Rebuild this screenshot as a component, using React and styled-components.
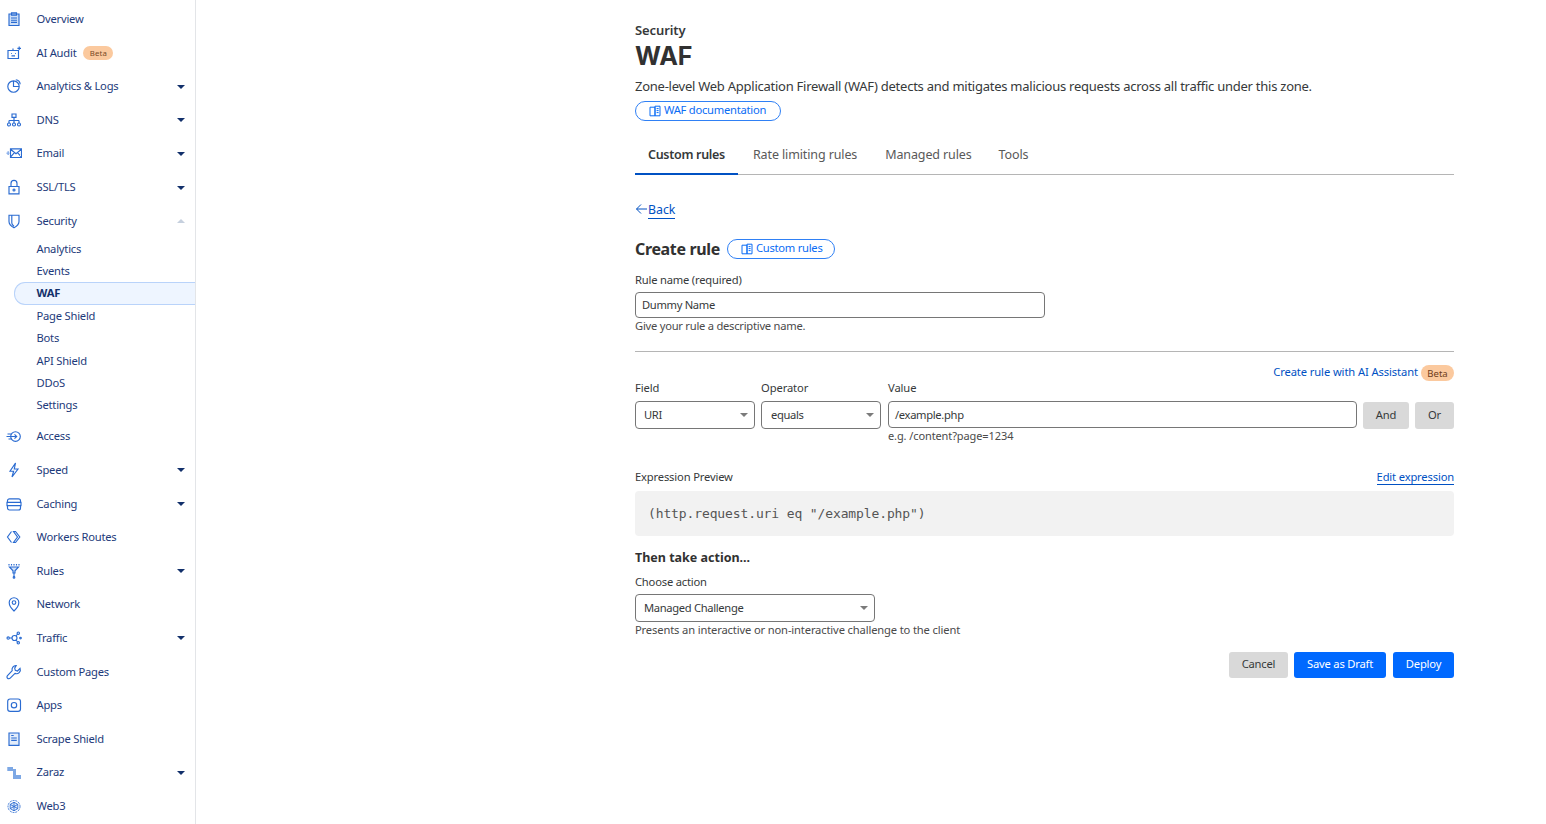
import React from 'react';
import styled, { createGlobalStyle } from 'styled-components';

const FONT = '"Noto Sans", "Open Sans", sans-serif';

const Global = createGlobalStyle`
  html, body { margin: 0; padding: 0; background: #fff; }
  body { font-family: ${FONT}; height: 824px; overflow: hidden; }
  * { box-sizing: border-box; }
`;

const Page = styled.div`display: flex; height: 824px; overflow: hidden;`;
const Sidebar = styled.nav`
  width: 196px; flex: none; height: 824px; overflow: hidden; padding-top: 2.3px;
  border-right: 1px solid #e3e5e8; display: flex; flex-direction: column;
`;
const NavRow = styled.div`
  height: 33.6px; flex: none; display: flex; align-items: center; position: relative;
  padding-left: 6px; padding-right: 10px; color: #1d3a7a; font-size: 11.2px; letter-spacing: -.22px;
`;
const NavIcon = styled.svg`
  width: 16px; height: 16px; flex: none; margin-right: 14.5px; fill: none; stroke: #2a6bd1; stroke-width: 1.15;
`;
const NavLabel = styled.span`flex: 1; white-space: nowrap; margin-top: -1px;`;
const Caret = styled.span`
  width: 0; height: 0; border-left: 4px solid transparent; border-right: 4px solid transparent; margin-top: 1px;
  border-top: ${p => (p.$up ? 0 : '4px solid #12306b')};
  border-bottom: ${p => (p.$up ? '4px solid #c6d0de' : 0)};
`;
const SmallBeta = styled.span`
  margin-left: 7px; margin-right: auto; height: 14px; width: 30px; border-radius: 7px; background: #fbc99e; color: #7a4a25;
  font-size: 7.8px; display: flex; align-items: center; justify-content: center; letter-spacing: .2px;
`;
const AuditLabel = styled.span`white-space: nowrap; margin-top: -1px;`;
const SubList = styled.div`display: flex; flex-direction: column; margin-bottom: 3px; flex: none;`;
const SubRow = styled.div`
  height: 22.4px; flex: none; display: flex; align-items: center; padding-left: 36.5px; padding-bottom: 1px; color: #1d3a7a; font-size: 11.2px; letter-spacing: -.22px;
`;
const ActiveSub = styled(SubRow)`
  margin-left: 14px; padding-left: 21.5px; font-weight: 700; color: #12306b; background: #eef5ff;
  border: 1px solid #b9d3fa; border-right: 0; border-radius: 11px 0 0 11px;
`;

const Main = styled.main`
  width: 819px; margin-left: 439px; flex: none; padding-top: 20px; display: flex; flex-direction: column;
  color: #36393a; font-size: 11.2px;
`;
const Eyebrow = styled.div`height: 20px; line-height: 20px; font-size: 13px; font-weight: 600; letter-spacing: -.1px;`;
const Title = styled.h1`margin: -2px 0 2px; height: 36px; line-height: 36px; font-size: 25px; font-weight: 700; color: #313131; font-family: "Inter", ${FONT};`;
const Desc = styled.p`margin: 0; height: 20px; line-height: 20px; font-size: 13px; letter-spacing: -.25px;`;
const Pill = styled.a`
  height: 20px; width: ${p => p.$w}px; display: inline-flex; align-items: center; align-self: flex-start; gap: 3px; border: 1px solid #2f80f5; border-radius: 10px;
  padding: 0 0 3px 13px; color: #0a6cf5; font-size: 11.2px; letter-spacing: -.25px; white-space: nowrap;
`;
const DocPill = styled(Pill)`margin-top: 5px;`;
const BookSvg = styled.svg`width: 12px; height: 12px; fill: none; stroke: #0a6cf5; stroke-width: 1; flex: none; margin-top: 3px;`;
const Tabs = styled.div`margin-top: 12px; height: 42px; display: flex; border-bottom: 1px solid #b5b5b5;`;
const Tab = styled.div`
  height: 42px; padding: 0 ${p => p.$pr || 13}px 0 ${p => p.$pl || 13}px; line-height: 43px; font-size: 12.5px; white-space: nowrap;
  letter-spacing: ${p => (p.$active ? '-.3px' : '-.12px')};
  font-weight: ${p => (p.$active ? 600 : 400)}; color: ${p => (p.$active ? '#36393a' : '#595959')};
  border-bottom: ${p => (p.$active ? '2px solid #0051c3' : 'none')};
`;
const BackRow = styled.div`margin-top: 24px; height: 20px; display: flex; align-items: center; color: #0051c3; font-size: 12.3px;`;
const BackLink = styled.a`border-bottom: 1px solid #0051c3; line-height: 18px; height: 18px; margin-top: 1px;`;
const CreateRow = styled.div`margin-top: 20px; height: 20px; display: flex; align-items: center; gap: 7px;`;
const CreateTitle = styled.h2`margin: 0; font-size: 16px; letter-spacing: -.35px; font-weight: 700; color: #313131; line-height: 20px;`;
const Label = styled.label`display: block; height: 16px; line-height: 16px; font-size: 11.2px; letter-spacing: -.2px; color: #36393a; margin-top: ${p => p.$mt || 0}px;`;
const Box = styled.div`
  height: ${p => p.$h || 26}px; border: 1px solid #767676; border-radius: 4px; padding-left: ${p => p.$pl || 6}px;
  display: flex; align-items: center; font-size: 11.2px; letter-spacing: -.33px; color: #36393a; background: #fff; position: relative; flex: none;
  width: ${p => (p.$w ? p.$w + 'px' : 'auto')}; padding-bottom: ${p => (p.$h === 28 ? 2 : 1)}px;
`;
const NameInput = styled(Box)`margin-top: 4px;`;
const Help = styled.div`height: 16px; line-height: 16px; font-size: 11.2px; letter-spacing: ${p => p.$ls || -0.25}px; color: #4a4a4a;`;
const Divider = styled.hr`margin: 17px 0 0; border: 0; height: 1px; background: #b5b5b5; width: 100%;`;
const AiRow = styled.div`margin-top: 13px; height: 16px; display: flex; justify-content: flex-end; align-items: center; gap: 3px; color: #0051c3; font-size: 11.2px; letter-spacing: -.1px;`;
const AiText = styled.span`margin-top: -3px;`;
const Beta = styled.span`width: 33px; height: 16px; border-radius: 8px; background: #fbc99e; color: #6c3b1a; font-size: 9.5px; letter-spacing: 0; display: flex; align-items: center; justify-content: center;`;
const Grid = styled.div`display: grid; grid-template-columns: 120px 121px 469px 46px 39px; column-gap: 6px; grid-template-rows: 14px 6px 28px 14px;`;
const GridLabel = styled.div`grid-row: 1; line-height: 14px; font-size: 11.2px; letter-spacing: -.1px;`;
const Caret2 = styled.span`
  position: absolute; right: 6px; top: 50%; margin-top: -2px; width: 0; height: 0; border-left: 4px solid transparent; border-right: 4px solid transparent; border-top: 4px solid #7b7b7b;
`;
const SelectCell = styled(Box)`grid-row: 3;`;
const ValueInput = styled(Box)`grid-row: 3; height: 27px;`;
const GreyBtn = styled.button`
  height: 26px; width: ${p => p.$w}px; border: 0; border-radius: 3px; background: #d9d9d9; color: #36393a; font: inherit; font-size: 11.2px; letter-spacing: -.2px; padding: 0 0 3px;
  display: flex; align-items: center; justify-content: center;
`;
const GridBtn = styled(GreyBtn)`grid-row: 3; height: 27px; margin-top: 1px; width: auto;`;
const GridHelp = styled.div`grid-row: 4; grid-column: 3; line-height: 14px; font-size: 11px; letter-spacing: -.1px; color: #4a4a4a;`;
const ExprHead = styled.div`margin-top: 26px; height: 16px; display: flex; justify-content: space-between; line-height: 16px; font-size: 11.2px; letter-spacing: -.16px;`;
const EditLink = styled.a`color: #0051c3; border-bottom: 1px solid #0051c3; height: 16px;`;
const Code = styled.pre`
  margin: 6px 0 0; height: 45px; line-height: 45px; border-radius: 4px; background: #f2f2f2; padding-left: 13px; color: #555;
  font-family: "DejaVu Sans Mono", monospace; font-size: 13px; letter-spacing: -.12px;
`;
const ActionTitle = styled.div`margin-top: 12px; height: 20px; line-height: 20px; font-size: 12.5px; font-weight: 700; color: #313131;`;
const ActionSelect = styled(Box)`margin-top: 4px;`;
const Buttons = styled.div`margin-top: 14px; display: flex; justify-content: flex-end; gap: 6px;`;
const BlueBtn = styled(GreyBtn)`background: #0069ff; color: #fff;`;
const DeployBtn = styled(BlueBtn)`margin-left: 1px;`;

const BookIcon = () => (
  <BookSvg viewBox="0 0 12 12"><path d="M6 2.2H1v8.6h5zM6 1.2h5v9.6H6zM7.6 3.6h2M7.6 5.6h2M7.6 7.6h2" /></BookSvg>
);

const icons = {
  overview: <><path d="M3 3h10v11.5H3z" fill="#cfe0f7" /><path d="M5.5 1.8h5v2.4h-5zM5 7h6M5 9.2h6M5 11.4h6" /></>,
  audit: <><path d="M2 5.5h10.5v8H2z" /><path d="M7 5.5V3.5M5 8.5h.8M9 8.5h.8M5.5 10.8h3.5M13.2 1.5v3.6M11.4 3.3h3.6" /></>,
  analytics: <><circle cx="7.5" cy="8.5" r="5.7" /><path d="M7.5 3v5.5h5.5" /><path d="M9.8 1.8a5 5 0 0 1 4.4 4.5" /></>,
  dns: <><path d="M6 2h4v3.4H6zM8 5.4v3M3 8.5h10M3 8.5v2.5M8 8.5v2.5M13 8.5v2.5" /><circle cx="3" cy="12.5" r="1.5" /><circle cx="8" cy="12.5" r="1.5" /><circle cx="13" cy="12.5" r="1.5" /></>,
  email: <><path d="M4.5 3.8h11v8.7h-11zM4.5 4.2l5.5 4.6 5.5-4.6M4.5 12.2l3.9-4.6M15.5 12.2l-3.9-4.6" /><path d="M.5 8.2h3M2.2 6.3v3.8" stroke="#8fb2ea" strokeWidth="1.6" /></>,
  lock: <><path d="M3 7.5h10v7.3H3zM5 7.5V4.4a3 3 0 0 1 6 0v3.1" /><circle cx="8" cy="11" r="1" /></>,
  shield: <path d="M3 2.2h10v6.3c0 3-2.5 5-5 6.3-2.5-1.3-5-3.3-5-6.3zM5.8 2.5v7.5c0 1.3 1.2 2.5 2.2 3.2" />,
  access: <><circle cx="9.5" cy="8.5" r="4.8" /><path d="M.5 8.5h10M8.5 6.4l2.2 2.1-2.2 2.1M1.5 6h4M2.5 11h3" /></>,
  speed: <path d="M9.5 1 4 9.2h3.6L6 15l6-8H8.3z" />,
  caching: <path d="M3.5 2.8h9a2 2 0 0 1 2 2v1.6h-13V4.8a2 2 0 0 1 2-2zM1 6.4h14v3.2H1zM1.5 9.6h13v2.4a2 2 0 0 1-2 2h-9a2 2 0 0 1-2-2z" />,
  workers: <path d="M5.5 2.5 1.5 8l4 5.5M7.5 2.5h2L13.8 8l-4.3 5.5h-2L11.5 8z" />,
  rules: <><path d="M3.5 4 7 7.8V10h2V7.8L12.5 4z" fill="#cfe0f7" /><path d="M8 10v4M3 1v1.6M5.5 1v1.6M8 1v1.6M10.5 1v1.6M13 1v1.6" /><circle cx="8" cy="14.4" r=".8" /></>,
  network: <><path d="M8 15S3.2 10.5 3.2 6.5a4.8 4.8 0 0 1 9.6 0C12.8 10.5 8 15 8 15z" /><circle cx="8" cy="6.5" r="1.8" /></>,
  traffic: <><circle cx="2.2" cy="8" r="1.2" /><circle cx="8.5" cy="8" r="2.5" /><circle cx="12.3" cy="3.2" r="1.2" /><circle cx="12.3" cy="12.8" r="1.2" /><circle cx="14.5" cy="8" r=".8" /><path d="M3.5 8H6M10 6l1.6-2M10 10l1.6 2" /></>,
  pages: <path d="M10.2 1.6a3.9 3.9 0 0 0-4 5.1L1.5 11.6a1.8 1.8 0 0 0 2.7 2.6l4.8-4.8a3.9 3.9 0 0 0 5.1-5L11.5 7 9.3 6.4l-.6-2.2z" />,
  apps: <><rect x="1.7" y="2" width="12.8" height="12.4" rx="2.4" /><circle cx="8" cy="8.2" r="2.7" /></>,
  scrape: <><path d="M3 2h10v12.4H3z" fill="#e2ecfa" /><path d="M5.2 4.5h2.5M5.2 7h5.6M5.2 9.3h5.6" /></>,
  zaraz: <path d="M1.3 3H7v2h3v6h5v4H7V7H1.3z" fill="#7da8e5" stroke="none" />,
  web3: <g strokeWidth=".9"><circle cx="8" cy="8.5" r="6" strokeDasharray="2 .9" /><path d="M8 4.2 11.8 6.4v4.2L8 12.8 4.2 10.6V6.4z" fill="#e6eefa" /><path d="M8 4.2v8.6M4.2 6.4l7.6 4.2M11.8 6.4l-7.6 4.2" /></g>,
};

const Row = ({ icon, children, caret, up }) => (
  <NavRow>
    <NavIcon viewBox="0 0 16 16">{icons[icon]}</NavIcon>
    <NavLabel>{children}</NavLabel>
    {caret && <Caret $up={up} />}
  </NavRow>
);

export default function App() {
  return (
    <Page>
      <Global />
      <Sidebar>
        <Row icon="overview">Overview</Row>
        <NavRow>
          <NavIcon viewBox="0 0 16 16">{icons.audit}</NavIcon>
          <AuditLabel>AI Audit</AuditLabel>
          <SmallBeta>Beta</SmallBeta>
        </NavRow>
        <Row icon="analytics" caret>Analytics &amp; Logs</Row>
        <Row icon="dns" caret>DNS</Row>
        <Row icon="email" caret>Email</Row>
        <Row icon="lock" caret>SSL/TLS</Row>
        <Row icon="shield" caret up>Security</Row>
        <SubList>
          <SubRow>Analytics</SubRow>
          <SubRow>Events</SubRow>
          <ActiveSub>WAF</ActiveSub>
          <SubRow>Page Shield</SubRow>
          <SubRow>Bots</SubRow>
          <SubRow>API Shield</SubRow>
          <SubRow>DDoS</SubRow>
          <SubRow>Settings</SubRow>
        </SubList>
        <Row icon="access">Access</Row>
        <Row icon="speed" caret>Speed</Row>
        <Row icon="caching" caret>Caching</Row>
        <Row icon="workers">Workers Routes</Row>
        <Row icon="rules" caret>Rules</Row>
        <Row icon="network">Network</Row>
        <Row icon="traffic" caret>Traffic</Row>
        <Row icon="pages">Custom Pages</Row>
        <Row icon="apps">Apps</Row>
        <Row icon="scrape">Scrape Shield</Row>
        <Row icon="zaraz" caret>Zaraz</Row>
        <Row icon="web3">Web3</Row>
      </Sidebar>
      <Main>
        <Eyebrow>Security</Eyebrow>
        <Title>WAF</Title>
        <Desc>Zone-level Web Application Firewall (WAF) detects and mitigates malicious requests across all traffic under this zone.</Desc>
        <DocPill $w={146}><BookIcon />WAF documentation</DocPill>
        <Tabs>
          <Tab $active>Custom rules</Tab>
          <Tab $pl={15} $pr={14}>Rate limiting rules</Tab>
          <Tab $pl={14} $pr={13}>Managed rules</Tab>
          <Tab $pl={14}>Tools</Tab>
        </Tabs>
        <BackRow>
          <svg width="13" height="12" viewBox="0 0 13 12" fill="none" stroke="#0051c3" strokeWidth="1"><path d="M12 6H1.5M6 1.5 1.5 6 6 10.5" /></svg>
          <BackLink>Back</BackLink>
        </BackRow>
        <CreateRow>
          <CreateTitle>Create rule</CreateTitle>
          <Pill $w={108}><BookIcon />Custom rules</Pill>
        </CreateRow>
        <Label $mt={13}>Rule name (required)</Label>
        <NameInput $w={410}>Dummy Name</NameInput>
        <Help>Give your rule a descriptive name.</Help>
        <Divider />
        <AiRow><AiText>Create rule with AI Assistant</AiText><Beta>Beta</Beta></AiRow>
        <Grid>
          <GridLabel>Field</GridLabel>
          <GridLabel>Operator</GridLabel>
          <GridLabel>Value</GridLabel>
          <SelectCell $h={28} $w={120} $pl={8}>URI<Caret2 /></SelectCell>
          <SelectCell $h={28} $w={120} $pl={9}>equals<Caret2 /></SelectCell>
          <ValueInput>/example.php</ValueInput>
          <GridBtn>And</GridBtn>
          <GridBtn>Or</GridBtn>
          <GridHelp>e.g. /content?page=1234</GridHelp>
        </Grid>
        <ExprHead>
          <span>Expression Preview</span>
          <EditLink>Edit expression</EditLink>
        </ExprHead>
        <Code>(http.request.uri eq "/example.php")</Code>
        <ActionTitle>Then take action...</ActionTitle>
        <Label $mt={6}>Choose action</Label>
        <ActionSelect $w={240} $h={28} $pl={8}>Managed Challenge<Caret2 /></ActionSelect>
        <Help $ls={-0.15}>Presents an interactive or non-interactive challenge to the client</Help>
        <Buttons>
          <GreyBtn $w={59}>Cancel</GreyBtn>
          <BlueBtn $w={92}>Save as Draft</BlueBtn>
          <DeployBtn $w={61}>Deploy</DeployBtn>
        </Buttons>
      </Main>
    </Page>
  );
}
